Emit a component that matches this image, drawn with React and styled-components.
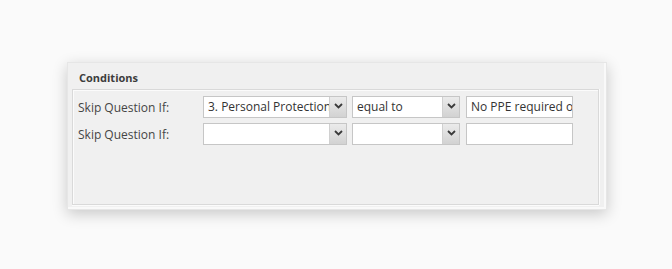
import React from "react";
import styled, { createGlobalStyle } from "styled-components";

const GlobalStyle = createGlobalStyle`
  html, body {
    margin: 0;
    padding: 0;
    background: #fafafa;
    font-family: "Open Sans", "Liberation Sans", sans-serif;
  }
`;

const rows = [
  { question: "3. Personal Protection Equipment", operator: "equal to", value: "No PPE required on site" },
  { question: "", operator: "", value: "" },
];

const Chevron = () => (
  <svg width="9" height="6" viewBox="0 0 9 6">
    <path d="M1 1 L4.5 4.5 L8 1" fill="none" stroke="#3a3a3a" strokeWidth="1.8" />
  </svg>
);

const Dropdown = ({ width, value }) => (
  <SelectBox $width={width}>
    <SelectText>{value}</SelectText>
    <SelectButton>
      <Chevron />
    </SelectButton>
  </SelectBox>
);

const App = () => {
  return (
    <>
      <GlobalStyle />
      <Page>
        <Panel>
          <Header>Conditions</Header>
          <Fieldset>
            {rows.map((row, i) => (
              <Row key={i}>
                <Label>Skip Question If:</Label>
                <Dropdown width={144} value={row.question} />
                <Dropdown width={108} value={row.operator} />
                <TextInput>{row.value}</TextInput>
              </Row>
            ))}
          </Fieldset>
        </Panel>
      </Page>
    </>
  );
};

export default App;

const Page = styled.div`
  width: 672px;
  height: 269px;
  padding: 62px 0 0 67px;
  box-sizing: border-box;
`;

const Panel = styled.div`
  width: 540px;
  height: 148px;
  box-sizing: border-box;
  background: #f0f0f0;
  border: 1px solid #e6e6e6;
  box-shadow: 0 4px 14px rgba(0, 0, 0, 0.2), inset -2px -2px 0 #f9f9f9;
  display: flex;
  flex-direction: column;
  padding: 0 7px 4px 4px;
`;

const Header = styled.div`
  height: 26px;
  display: flex;
  align-items: center;
  padding: 2px 0 0 7px;
  box-sizing: border-box;
  font-size: 11px;
  font-weight: bold;
  color: #3c3c3c;
`;

const Fieldset = styled.div`
  flex: 1;
  border: 1px solid #d9d9d9;
  box-shadow: 0 1px 0 #fbfbfb, 1px 0 0 #fbfbfb, inset 1px 1px 0 #fbfbfb;
  padding: 6px 5px;
  display: flex;
  flex-direction: column;
  gap: 5px;
`;

const Row = styled.div`
  display: flex;
  align-items: center;
  height: 22px;
`;

const Label = styled.div`
  width: 125px;
  font-size: 12px;
  color: #454545;
`;

const SelectBox = styled.div`
  width: ${(p) => p.$width}px;
  height: 22px;
  box-sizing: border-box;
  border: 1px solid #c6c6c6;
  background: #fff;
  display: flex;
  margin-right: 5px;
  overflow: hidden;
`;

const SelectText = styled.div`
  flex: 1;
  min-width: 0;
  padding: 0 0 0 4px;
  font-size: 12px;
  line-height: 20px;
  color: #333;
  white-space: nowrap;
  overflow: hidden;
`;

const SelectButton = styled.div`
  width: 17px;
  flex-shrink: 0;
  display: flex;
  align-items: center;
  justify-content: center;
  background: linear-gradient(#ebebeb, #d2d2d2);
  border-left: 1px solid #d0d0d0;
  padding-bottom: 3px;
  box-sizing: border-box;
`;

const TextInput = styled.div`
  width: 107px;
  height: 22px;
  box-sizing: border-box;
  border: 1px solid #c6c6c6;
  background: #fff;
  padding: 0 0 0 4px;
  font-size: 12px;
  line-height: 20px;
  color: #333;
  white-space: nowrap;
  overflow: hidden;
  margin-left: 1px;
`;
